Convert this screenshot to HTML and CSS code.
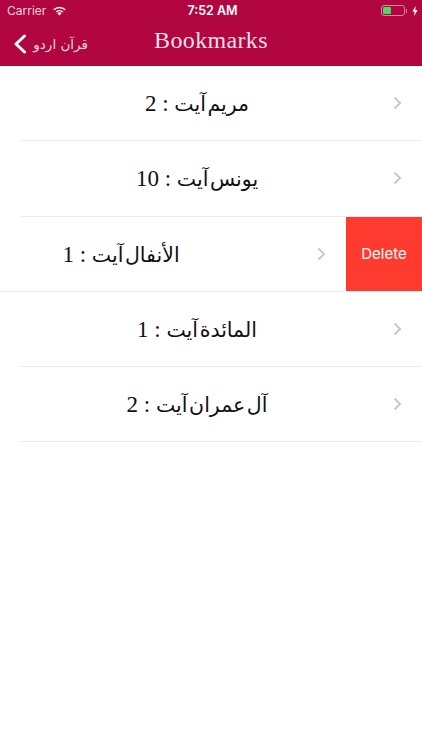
FILE: index.html
```html
<!DOCTYPE html>
<html lang="ur">
<head>
<meta charset="utf-8">
<title>Bookmarks</title>
<link rel="stylesheet" href="styles.css">
</head>
<body>
<header class="top">
  <div class="status">
    <div class="status-left">
      <span>Carrier</span>
      <svg class="wifi" viewBox="0 0 16 12" width="15" height="11"><path d="M8 11.500 5.600 9a3.400 3.400 0 0 1 4.800 0z" fill="#fff"/><path d="M3.700 7.100a6.100 6.100 0 0 1 8.600 0l-1.200 1.200a4.400 4.400 0 0 0-6.200 0z" fill="#fff"/><path d="M1.200 4.600a9.600 9.600 0 0 1 13.600 0l-1.200 1.200a7.900 7.900 0 0 0-11.200 0z" fill="#fff"/></svg>
    </div>
    <div class="clock">7:52 AM</div>
    <div class="status-right">
      <span class="battery"><span class="level"></span></span>
      <span class="nub"></span>
      <svg class="bolt" viewBox="0 0 6 10" width="6" height="10"><path d="M3.600 0 .4 5.600h2.200L2.200 10l3.400-6H3.300z" fill="#fff"/></svg>
    </div>
  </div>
  <nav class="nav">
    <a class="back">
      <svg viewBox="0 0 14 20" width="14" height="20"><path d="M11.500 2 3 10l8.500 8" fill="none" stroke="#fff" stroke-width="3" stroke-linecap="round" stroke-linejoin="round"/></svg>
      <span class="back-label" dir="rtl">قرآن اردو</span>
    </a>
    <h1>Bookmarks</h1>
  </nav>
</header>
<main class="list">
  <div class="row"><div class="label"><span dir="rtl"><span class="ar">مریم آیت</span> : 2</span></div><svg class="chev" viewBox="0 0 9 14" width="9" height="14"><path d="M1.500 1.500 7 7l-5.500 5.500" fill="none" stroke="#c7c7cc" stroke-width="1.900"/></svg></div>
  <div class="row"><div class="label"><span dir="rtl"><span class="ar">یونس آیت</span> : 10</span></div><svg class="chev" viewBox="0 0 9 14" width="9" height="14"><path d="M1.500 1.500 7 7l-5.500 5.500" fill="none" stroke="#c7c7cc" stroke-width="1.900"/></svg></div>
  <div class="row swiped">
    <div class="swipe-main"><div class="label"><span dir="rtl"><span class="ar">الأنفال آیت</span> : 1</span></div><svg class="chev" viewBox="0 0 9 14" width="9" height="14"><path d="M1.500 1.500 7 7l-5.500 5.500" fill="none" stroke="#c7c7cc" stroke-width="1.900"/></svg></div>
    <div class="delete">Delete</div>
  </div>
  <div class="row"><div class="label"><span dir="rtl"><span class="ar">المائدة آیت</span> : 1</span></div><svg class="chev" viewBox="0 0 9 14" width="9" height="14"><path d="M1.500 1.500 7 7l-5.500 5.500" fill="none" stroke="#c7c7cc" stroke-width="1.900"/></svg></div>
  <div class="row"><div class="label"><span dir="rtl"><span class="ar">آل عمران آیت</span> : 2</span></div><svg class="chev" viewBox="0 0 9 14" width="9" height="14"><path d="M1.500 1.500 7 7l-5.500 5.500" fill="none" stroke="#c7c7cc" stroke-width="1.900"/></svg></div>
</main>
</body>
</html>
```
FILE: styles.css
```css
* { box-sizing: border-box; }
html, body { margin: 0; padding: 0; background: #fff; }
body { width: 422px; height: 750px; overflow: hidden; font-family: "Inter", "Liberation Sans", sans-serif; }
.top { height: 66px; background: #b10640; color: #fff; }
.status { height: 21px; display: grid; grid-template-columns: 1fr auto 1fr; align-items: center; padding: 0 4px 0 7px; font-size: 12px; }
.status-left { display: flex; align-items: center; gap: 6px; color: #f3d5df; }
.clock { font-size: 12.500px; font-weight: 600; }
.status-right { display: flex; align-items: center; justify-content: flex-end; }
.battery { width: 24px; height: 11px; border: 1px solid #d9839f; border-radius: 3px; padding: 1px; display: block; }
.level { display: block; width: 8px; height: 100%; background: #4cd964; border-radius: 1px; }
.nub { width: 1px; height: 4px; background: #d9839f; margin: 0 5px 0 1px; }
.nav { height: 45px; display: flex; align-items: center; position: relative; padding-left: 13px; }
.back { display: flex; align-items: center; gap: 8px; }
.back-label { font-family: "DejaVu Sans", sans-serif; font-size: 13.500px; color: #f3d5df; width: 53px; white-space: nowrap; }
.nav h1 { position: absolute; left: 0; right: 0; top: 0; margin: 0; text-align: center; line-height: 38px; font-family: "Liberation Serif", serif; font-weight: 400; font-size: 24px; letter-spacing: .35px; color: #f6dfe7; }
.list { display: flex; flex-direction: column; }
.row { height: 75.300px; margin-left: 21px; display: flex; align-items: center; border-bottom: 1px solid #ececec; padding-right: 20px; }
.label { flex: 1; text-align: center; font-family: "Liberation Serif", "DejaVu Sans", serif; font-size: 23px; color: #111; padding: 2px 20px 0 0; }
.ar { font-size: 20.500px; word-spacing: -3.500px; }
.swiped { margin-left: 0; padding-right: 0; overflow: hidden; }
.swipe-main { flex: 1; height: 100%; display: flex; align-items: center; margin-left: -76px; padding: 0 20px 0 21px; }
.delete { width: 76px; height: 100%; background: #ff3b30; color: #fff; font-size: 15px; display: flex; align-items: center; justify-content: center; }
```
